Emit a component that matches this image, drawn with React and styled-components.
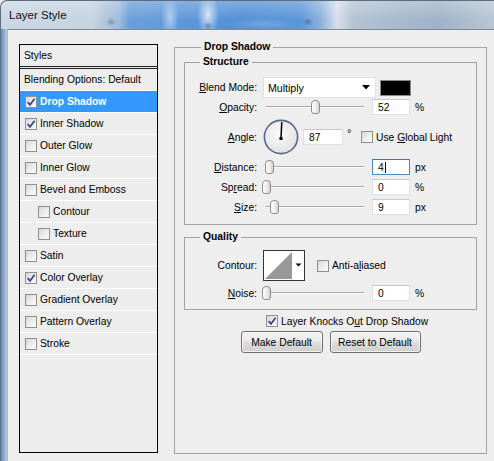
import React from 'react'
import styled, { createGlobalStyle } from 'styled-components'

const GlobalStyle = createGlobalStyle`
  html, body {
    margin: 0;
    padding: 0;
    background: #eeeeee;
  }
  body {
    font-family: "Liberation Sans", Arial, sans-serif;
    font-size: 10.3px;
    color: #000;
  }
`

const styleItems = [
  { label: 'Drop Shadow', checked: true, active: true },
  { label: 'Inner Shadow', checked: true },
  { label: 'Outer Glow' },
  { label: 'Inner Glow' },
  { label: 'Bevel and Emboss' },
  { label: 'Contour', indent: true },
  { label: 'Texture', indent: true },
  { label: 'Satin' },
  { label: 'Color Overlay', checked: true },
  { label: 'Gradient Overlay' },
  { label: 'Pattern Overlay' },
  { label: 'Stroke' },
]

function Check({ checked }) {
  return (
    <CheckBox>
      {checked && (
        <svg width="10" height="10" viewBox="0 0 10 10">
          <path d="M1.6 5 L4 7.8 L8.6 1.8" fill="none" stroke="#2d4686" strokeWidth="1.7" />
        </svg>
      )}
    </CheckBox>
  )
}

function Slider({ value }) {
  return (
    <SliderBox>
      <Track />
      <Thumb style={{ left: `${3 + (value / 100) * 98 - 4.5}px` }} />
    </SliderBox>
  )
}

function Dial({ angle }) {
  const r = (angle * Math.PI) / 180
  const x = 18 + 15 * Math.cos(r)
  const y = 18 - 15 * Math.sin(r)
  return (
    <svg width="36" height="36" viewBox="0 0 36 36">
      <defs>
        <radialGradient id="dialFill" cx="45%" cy="40%" r="60%">
          <stop offset="0" stopColor="#fbfbfb" />
          <stop offset="1" stopColor="#e2e2e2" />
        </radialGradient>
      </defs>
      <circle cx="18" cy="18" r="16.6" fill="url(#dialFill)" stroke="#55688a" strokeWidth="1.6" />
      <line x1="18" y1="19" x2={x} y2={y} stroke="#000" strokeWidth="1.5" />
      <rect x="16.5" y="18" width="3" height="3" fill="#000" />
    </svg>
  )
}

function ContourPreview() {
  return (
    <svg width="42" height="31" viewBox="0 0 42 31">
      <rect x="0.5" y="0.5" width="41" height="30" fill="#fff" stroke="#333" />
      <polygon points="2,29 29,2 29,29" fill="#989898" />
      <polygon points="32.5,13.5 38.5,13.5 35.5,16.5" fill="#000" />
    </svg>
  )
}

export default function App() {
  return (
    <>
      <GlobalStyle />
      <Window>
        <TitleBar>Layer Style</TitleBar>
        <Frame>
          <FrameEdge />
          <Content>
            <StylesPanel>
              <PanelHeader>Styles</PanelHeader>
              <StyleRow $plain>Blending Options: Default</StyleRow>
              {styleItems.map(item => (
                <StyleRow key={item.label} $active={item.active} $indent={item.indent}>
                  <Check checked={item.checked} />
                  <span>{item.label}</span>
                </StyleRow>
              ))}
            </StylesPanel>

            <MainGroup>
              <Legend $ml={17}>Drop Shadow</Legend>

              <SubGroup $pt={9} $pb={9}>
                <Legend $ml={15}>Structure</Legend>
                <Row $h={21}>
                  <Label><u>B</u>lend Mode:</Label>
                  <Select>
                    <span>Multiply</span>
                    <svg width="8" height="5" viewBox="0 0 8 5">
                      <polygon points="0,0 8,0 4,4.5" fill="#000" />
                    </svg>
                  </Select>
                  <Swatch />
                </Row>
                <Row $mt={1}>
                  <Label><u>O</u>pacity:</Label>
                  <Slider value={51} />
                  <Field>52</Field>
                  <Unit>%</Unit>
                </Row>
                <Row $mt={4} $h={36}>
                  <Label><u>A</u>ngle:</Label>
                  <Dial angle={87} />
                  <Field $w={40} $ml={4}>87</Field>
                  <Degree>°</Degree>
                  <Check />
                  <CheckText>Use <u>G</u>lobal Light</CheckText>
                </Row>
                <Row $mt={4}>
                  <Label><u>D</u>istance:</Label>
                  <Slider value={4} />
                  <Field $focus>4<Caret /></Field>
                  <Unit>px</Unit>
                </Row>
                <Row $mt={4}>
                  <Label>Sp<u>r</u>ead:</Label>
                  <Slider value={0} />
                  <Field>0</Field>
                  <Unit>%</Unit>
                </Row>
                <Row $mt={4}>
                  <Label><u>S</u>ize:</Label>
                  <Slider value={9} />
                  <Field>9</Field>
                  <Unit>px</Unit>
                </Row>
              </SubGroup>

              <SubGroup $mt={6} $pt={7} $pb={8}>
                <Legend $ml={15}>Quality</Legend>
                <Row $h={31}>
                  <Label>Contour:</Label>
                  <ContourPreview />
                  <Spacer $w={12} />
                  <Check />
                  <CheckText>Anti-a<u>l</u>iased</CheckText>
                </Row>
                <Row $mt={4}>
                  <Label><u>N</u>oise:</Label>
                  <Slider value={0} />
                  <Field>0</Field>
                  <Unit>%</Unit>
                </Row>
              </SubGroup>

              <KnockRow>
                <Check checked />
                <CheckText>Layer Knocks O<u>u</u>t Drop Shadow</CheckText>
              </KnockRow>
              <ButtonRow>
                <Button $w={82}>Make Default</Button>
                <Button $w={91}>Reset to Default</Button>
              </ButtonRow>
            </MainGroup>
          </Content>
        </Frame>
      </Window>
    </>
  )
}

const Window = styled.div`
  width: 494px;
  height: 461px;
  overflow: hidden;
  display: flex;
  flex-direction: column;
  background: #eeeeee;
`

const TitleBar = styled.div`
  height: 29px;
  flex: none;
  display: flex;
  align-items: center;
  padding-left: 8px;
  box-sizing: border-box;
  border-top-left-radius: 7px;
  border-top: 1px solid #5d6b7c;
  border-left: 1px solid #5d6b7c;
  font-family: "Liberation Sans", Arial, sans-serif;
  font-size: 11.5px;
  color: #111;
  background:
    radial-gradient(ellipse 5px 4px at 110px 21px, rgba(50, 60, 80, 0.35), transparent),
    radial-gradient(ellipse 5px 4px at 207px 25px, rgba(40, 50, 70, 0.4), transparent),
    radial-gradient(ellipse 5px 4px at 307px 21px, rgba(40, 50, 70, 0.35), transparent),
    radial-gradient(ellipse 9px 22px at 169px 16px, rgba(200, 220, 242, 0.75), transparent),
    radial-gradient(ellipse 11px 22px at 207px 14px, rgba(232, 240, 250, 0.85), transparent),
    radial-gradient(ellipse 38px 6px at 262px 23px, rgba(140, 180, 228, 0.55), transparent),
    linear-gradient(180deg, rgba(255, 255, 255, 0.25), rgba(255, 255, 255, 0) 70%),
    linear-gradient(90deg, #cad7e5 0, #c6d3e1 92px, #b0c4db 105px, #9dbbdd 118px, #6a9fd9 128px,
      #5f98d8 180px, #528fd5 240px, #5c96d7 300px, #8cb2dc 320px, #d6e0eb 336px,
      #b3c3d4 352px, #a7b9cd 400px, #9fb3c8 440px, #b9c7d6 494px);
`

const Frame = styled.div`
  flex: 1;
  display: flex;
  min-height: 0;
`

const FrameEdge = styled.div`
  width: 7px;
  flex: none;
  background: linear-gradient(90deg, #4f6485 0, #7e97b8 2px, #9ab0cb 5px, #c3d0df 7px);
`

const Content = styled.div`
  flex: 1;
  display: flex;
  align-items: flex-start;
  gap: 16px;
  padding: 11px 0 0 11px;
  border-top: 1px solid #7c8898;
  border-left: 1px solid #a6b3c3;
  background: #eeeeee;
`

const StylesPanel = styled.div`
  width: 139px;
  height: 409px;
  margin-top: 3px;
  flex: none;
  box-sizing: border-box;
  border: 1px solid #000;
  background: #ededed;
`

const PanelHeader = styled.div`
  height: 21px;
  display: flex;
  align-items: center;
  padding-left: 4px;
  border-bottom: 3px double #222;
`

const StyleRow = styled.div`
  height: 21px;
  display: flex;
  align-items: center;
  gap: 3px;
  padding-left: ${p => (p.$plain ? 4 : p.$indent ? 18 : 5)}px;
  border-bottom: 1px solid #fff;
  background: ${p => (p.$active ? '#3399ff' : 'transparent')};
  color: ${p => (p.$active ? '#fff' : '#000')};
  font-weight: ${p => (p.$active ? 'bold' : 'normal')};
  white-space: nowrap;
`

const CheckBox = styled.span`
  width: 12px;
  height: 12px;
  flex: none;
  box-sizing: border-box;
  display: inline-flex;
  align-items: center;
  justify-content: center;
  border: 1px solid #8e8f8f;
  background: linear-gradient(135deg, #d6d6d6 0%, #eeeeee 55%, #fbfbfb 100%);
`

const MainGroup = styled.fieldset`
  width: 313px;
  height: 413px;
  flex: none;
  box-sizing: border-box;
  margin: 0;
  padding: 3px 9px 0 9px;
  border: 1px solid #a2a2a2;
  min-width: 0;
`

const SubGroup = styled.fieldset`
  margin: ${p => p.$mt || 0}px 0 0 0;
  padding: ${p => p.$pt}px 0 ${p => p.$pb}px 0;
  border: 1px solid #a2a2a2;
  min-width: 0;
`

const Legend = styled.legend`
  margin-left: ${p => p.$ml}px;
  padding: 0 3px;
  font-weight: bold;
  line-height: 12px;
`

const Row = styled.div`
  display: flex;
  align-items: center;
  height: ${p => p.$h || 16}px;
  margin-top: ${p => p.$mt || 0}px;
  white-space: nowrap;
`

const Label = styled.div`
  width: 72px;
  flex: none;
  margin-right: 6px;
  text-align: right;
`

const Select = styled.div`
  width: 113px;
  height: 21px;
  box-sizing: border-box;
  display: flex;
  align-items: center;
  justify-content: space-between;
  padding: 0 5px 0 4px;
  background: #fff;
  border: 1px solid #e2e2e2;
  font-size: 10.6px;
`

const Swatch = styled.div`
  width: 31px;
  height: 16px;
  margin-left: 4px;
  box-sizing: border-box;
  background: #000;
  border: 1px solid #8a8a8a;
`

const SliderBox = styled.div`
  position: relative;
  width: 104px;
  height: 16px;
  flex: none;
`

const Track = styled.div`
  position: absolute;
  left: 3px;
  right: 3px;
  top: 7px;
  height: 0;
  border-top: 1px solid #a8a8a8;
  border-bottom: 1px solid #fdfdfd;
`

const Thumb = styled.div`
  position: absolute;
  top: 1px;
  width: 9px;
  height: 14px;
  box-sizing: border-box;
  border: 1px solid #8d8d8d;
  border-radius: 4px 4px 3px 3px;
  background: linear-gradient(90deg, #ffffff 0%, #efefef 50%, #d2d2d2 100%);
`

const Field = styled.div`
  width: ${p => p.$w || 38}px;
  height: 16px;
  margin-left: ${p => p.$ml ?? 5}px;
  flex: none;
  box-sizing: border-box;
  display: flex;
  align-items: center;
  padding-left: 5px;
  background: #fff;
  border: 1px solid ${p => (p.$focus ? '#4a88c2' : '#e0e0e0')};
  border-top-color: ${p => (p.$focus ? '#3d79b0' : '#c8c8c8')};
`

const Caret = styled.span`
  width: 1px;
  height: 11px;
  margin-left: 1px;
  background: #000;
`

const Unit = styled.span`
  margin-left: 5px;
`

const Degree = styled.span`
  align-self: flex-start;
  margin: 8px 0 0 4px;
  width: 14px;
  font-size: 11px;
`

const CheckText = styled.span`
  margin-left: 3px;
`

const Spacer = styled.div`
  width: ${p => p.$w}px;
  flex: none;
`

const KnockRow = styled.div`
  display: flex;
  align-items: center;
  height: 14px;
  margin: 4px 0 0 82px;
  white-space: nowrap;
`

const ButtonRow = styled.div`
  display: flex;
  justify-content: center;
  gap: 7px;
  margin-top: 3px;
`

const Button = styled.div`
  width: ${p => p.$w}px;
  height: 22px;
  box-sizing: border-box;
  display: flex;
  align-items: center;
  justify-content: center;
  border: 1px solid #707070;
  border-radius: 3px;
  background: linear-gradient(180deg, #f3f3f3 0%, #ebebeb 45%, #dddddd 50%, #cfcfcf 100%);
  box-shadow: inset 0 0 0 1px rgba(255, 255, 255, 0.7);
`
